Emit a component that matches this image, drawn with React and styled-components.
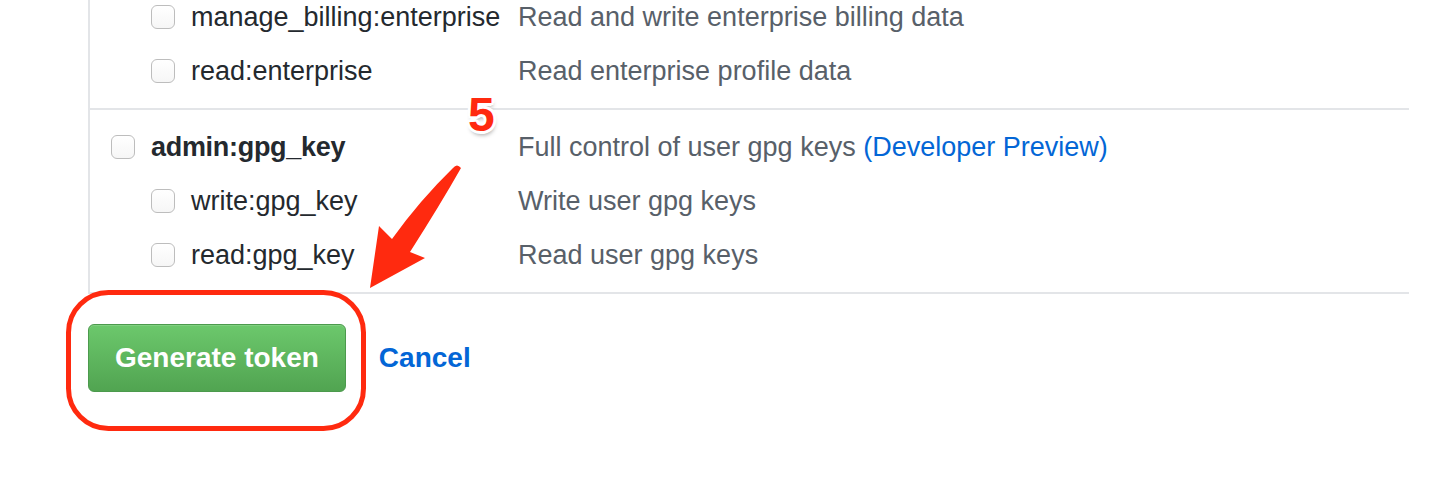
import React from "react";
import styled, { createGlobalStyle } from "styled-components";

const GlobalStyle = createGlobalStyle`
  html, body { margin: 0; padding: 0; background: #ffffff; }
  body { font-family: "Liberation Sans", Arial, sans-serif; overflow: hidden; }
`;

const Page = styled.div`
  position: relative;
  display: flex;
  flex-direction: column;
  align-items: flex-start;
  width: 1450px;
  height: 478px;
  overflow: hidden;
  padding-left: 88px;
  box-sizing: border-box;
`;

const Scopes = styled.div`
  margin-top: -20px;
  width: 1321px;
  box-sizing: border-box;
  border-left: 2px solid #e3e5e8;
  border-bottom: 2px solid #e3e5e8;
`;

const Group = styled.div`
  padding: 10px 0;
  & + & { border-top: 2px solid #e3e5e8; }
`;

const Row = styled.div`
  display: flex;
  align-items: center;
  height: 54px;
`;

const ScopeCell = styled.label`
  display: flex;
  align-items: center;
  gap: 16px;
  width: 428px;
  box-sizing: border-box;
  padding-left: ${(p) => (p.$child ? "61px" : "21px")};
  font-size: 27px;
  font-weight: ${(p) => (p.$child ? 400 : 700)};
  color: #24292e;
  white-space: nowrap;
  letter-spacing: ${(p) => (p.$child ? "0" : "-0.3px")};
`;

const Box = styled.input.attrs({ type: "checkbox" })`
  appearance: none;
  -webkit-appearance: none;
  margin: 0;
  flex: none;
  width: 24px;
  height: 24px;
  box-sizing: border-box;
  border: 1.5px solid #bdbdbd;
  border-radius: 6px;
  background: linear-gradient(#ffffff, #f6f6f6);
`;

const Description = styled.div`
  font-size: 27px;
  color: #586069;
  white-space: nowrap;
`;

const Link = styled.a`
  color: #0366d6;
  text-decoration: none;
`;

const Actions = styled.div`
  display: flex;
  align-items: center;
  gap: 33px;
  margin-top: 30px;
`;

const PrimaryButton = styled.button`
  height: 68px;
  padding: 0 26px;
  border: 1px solid #4c9a4d;
  border-radius: 6px;
  background: linear-gradient(#6cc86c, #51a451);
  color: #ffffff;
  font-family: "Liberation Sans", Arial, sans-serif;
  font-size: 28px;
  font-weight: 700;
  box-shadow: inset 0 1px 0 rgba(255,255,255,0.15);
`;

const CancelLink = styled.a`
  color: #0366d6;
  font-size: 28px;
  font-weight: 700;
  text-decoration: none;
`;

const Overlay = styled.svg`
  position: absolute;
  left: 0;
  top: 0;
  pointer-events: none;
`;

const StepNumber = styled.span`
  position: absolute;
  left: 468px;
  top: 91px;
  font-family: "Liberation Sans", Arial, sans-serif;
  font-weight: 700;
  font-size: 48px;
  line-height: 48px;
  color: #ff2a0f;
  text-shadow:
    -2px -2px 0 #fff, 2px -2px 0 #fff, -2px 2px 0 #fff, 2px 2px 0 #fff,
    0 -3px 0 #fff, 0 3px 0 #fff, -3px 0 0 #fff, 3px 0 0 #fff,
    1px 4px 4px rgba(0,0,0,0.35);
`;

const groups = [
  {
    key: "enterprise",
    children: [
      { name: "manage_billing:enterprise", desc: "Read and write enterprise billing data" },
      { name: "read:enterprise", desc: "Read enterprise profile data" },
    ],
  },
  {
    key: "gpg",
    name: "admin:gpg_key",
    desc: "Full control of user gpg keys",
    preview: true,
    children: [
      { name: "write:gpg_key", desc: "Write user gpg keys" },
      { name: "read:gpg_key", desc: "Read user gpg keys" },
    ],
  },
];

export default function App() {
  return (
    <>
      <GlobalStyle />
      <Page>
        <Scopes>
          {groups.map((g) => (
            <Group key={g.key}>
              {g.name && (
                <Row>
                  <ScopeCell>
                    <Box />
                    {g.name}
                  </ScopeCell>
                  <Description>
                    {g.desc}
                    {g.preview && (
                      <>
                        {" "}
                        <Link href="#">(Developer Preview)</Link>
                      </>
                    )}
                  </Description>
                </Row>
              )}
              {g.children.map((c) => (
                <Row key={c.name}>
                  <ScopeCell $child>
                    <Box />
                    {c.name}
                  </ScopeCell>
                  <Description>{c.desc}</Description>
                </Row>
              ))}
            </Group>
          ))}
        </Scopes>
        <Actions>
          <PrimaryButton>Generate token</PrimaryButton>
          <CancelLink href="#">Cancel</CancelLink>
        </Actions>

        <Overlay width="1450" height="478" viewBox="0 0 1450 478">
          <rect x="68.5" y="292.5" width="295" height="136" rx="40" ry="40"
            fill="none" stroke="#ff2a0f" strokeWidth="5" />
          <path
            d="M453 168 Q457 163 461 168 Q440 205 410 252 L425 258 L370 288 L379 226 L392 239 Q420 200 453 168 Z"
            fill="#ff2a0f"
          />
        </Overlay>
        <StepNumber>5</StepNumber>
      </Page>
    </>
  );
}
